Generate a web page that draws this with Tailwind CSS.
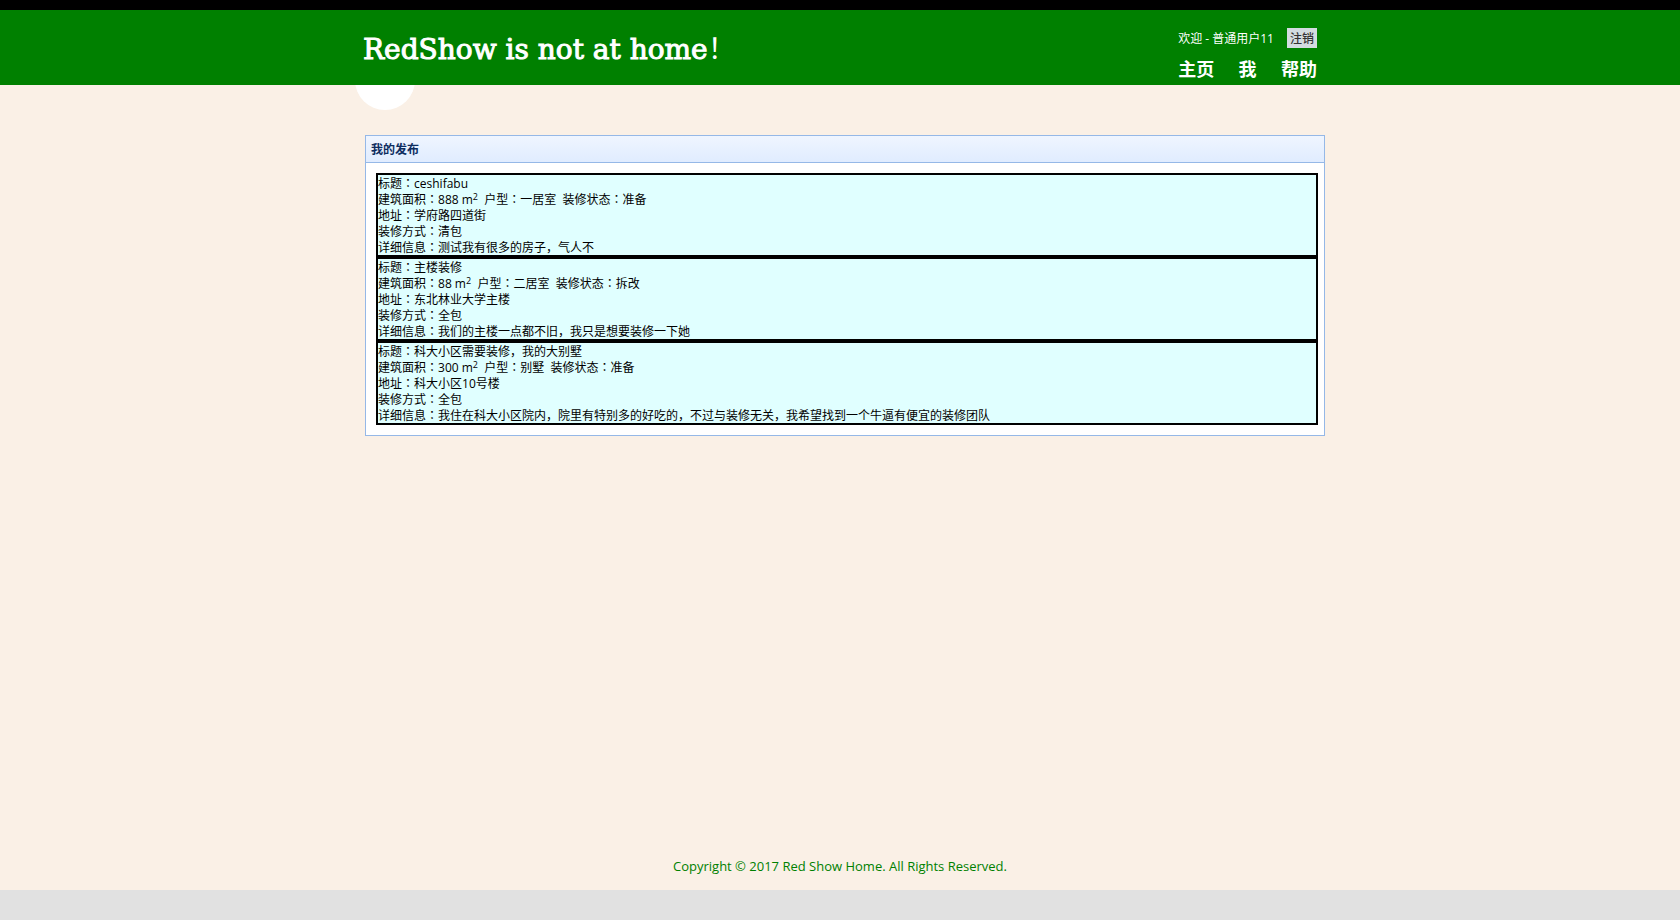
<!DOCTYPE html>
<html lang="zh-CN">
<head>
<meta charset="utf-8">
<meta name="viewport" content="width=device-width, initial-scale=1">
<title>RedShow</title>
<script src="https://cdn.jsdelivr.net/npm/@tailwindcss/browser@4"></script>
</head>
<body class="flex min-h-screen flex-col bg-[#faf0e6] font-['Open_Sans','Noto_Sans_CJK_SC',sans-serif] text-xs text-black">
<header class="relative z-10 h-[85px] border-t-10 border-black bg-[#008000] text-white">
  <div class="mx-auto flex max-w-[970px] items-start justify-between pr-2 pl-2">
    <h1 class="pt-5 font-['DejaVu_Serif','Noto_Sans_CJK_SC',serif] text-[28px] leading-10 [-webkit-text-stroke:1px_white]">RedShow is not at home<span class="leading-none [-webkit-text-stroke:0] font-['Noto_Sans_CJK_SC']">！</span></h1>
    <div class="pt-[18px]">
      <div class="flex h-5 items-center justify-between gap-[13px]">
        <span class="pt-px">欢迎 - 普通用户11</span>
        <button type="button" class="h-5 bg-[#d3dce0] px-[3px] pt-px leading-5 font-medium text-[#333333]">注销</button>
      </div>
      <nav class="flex justify-between pt-[7px] text-lg leading-[29px] font-bold">
        <a href="#">主页</a>
        <a href="#">我</a>
        <a href="#">帮助</a>
      </nav>
    </div>
  </div>
</header>
<main class="relative mx-auto w-full max-w-[970px] grow pt-[50px] pl-[10px]">
  <div class="absolute -top-[35px] left-0 size-[60px] rounded-full bg-white"></div>
  <section class="border border-[#95b8e7] bg-white">
    <h2 class="border-b border-[#95b8e7] bg-linear-to-b from-[#eff5ff] to-[#e0ecff] px-[5px] pt-[6px] pb-1 text-xs leading-4 font-bold text-[#0e2d5f]">我的发布</h2>
    <div class="py-[10px] pr-[6px] pl-[10px] leading-4">
      <article class="border-2 border-black bg-[#e0ffff] pt-px">
        <p>标题<span class="font-['Noto_Sans_CJK_TC'] leading-none" lang="zh-TW">：</span>ceshifabu</p>
        <p>建筑面积<span class="font-['Noto_Sans_CJK_TC'] leading-none" lang="zh-TW">：</span>888 m<sup class="text-[9px]">2</sup>&nbsp; 户型<span class="font-['Noto_Sans_CJK_TC'] leading-none" lang="zh-TW">：</span>一居室&nbsp; 装修状态<span class="font-['Noto_Sans_CJK_TC'] leading-none" lang="zh-TW">：</span>准备</p>
        <p>地址<span class="font-['Noto_Sans_CJK_TC'] leading-none" lang="zh-TW">：</span>学府路四道街</p>
        <p>装修方式<span class="font-['Noto_Sans_CJK_TC'] leading-none" lang="zh-TW">：</span>清包</p>
        <p class="-mb-px">详细信息<span class="font-['Noto_Sans_CJK_TC'] leading-none" lang="zh-TW">：</span>测试我有很多的房子，气人不</p>
      </article>
      <article class="border-2 border-black bg-[#e0ffff] pt-px">
        <p>标题<span class="font-['Noto_Sans_CJK_TC'] leading-none" lang="zh-TW">：</span>主楼装修</p>
        <p>建筑面积<span class="font-['Noto_Sans_CJK_TC'] leading-none" lang="zh-TW">：</span>88 m<sup class="text-[9px]">2</sup>&nbsp; 户型<span class="font-['Noto_Sans_CJK_TC'] leading-none" lang="zh-TW">：</span>二居室&nbsp; 装修状态<span class="font-['Noto_Sans_CJK_TC'] leading-none" lang="zh-TW">：</span>拆改</p>
        <p>地址<span class="font-['Noto_Sans_CJK_TC'] leading-none" lang="zh-TW">：</span>东北林业大学主楼</p>
        <p>装修方式<span class="font-['Noto_Sans_CJK_TC'] leading-none" lang="zh-TW">：</span>全包</p>
        <p class="-mb-px">详细信息<span class="font-['Noto_Sans_CJK_TC'] leading-none" lang="zh-TW">：</span>我们的主楼一点都不旧，我只是想要装修一下她</p>
      </article>
      <article class="border-2 border-black bg-[#e0ffff] pt-px">
        <p>标题<span class="font-['Noto_Sans_CJK_TC'] leading-none" lang="zh-TW">：</span>科大小区需要装修，我的大别墅</p>
        <p>建筑面积<span class="font-['Noto_Sans_CJK_TC'] leading-none" lang="zh-TW">：</span>300 m<sup class="text-[9px]">2</sup>&nbsp; 户型<span class="font-['Noto_Sans_CJK_TC'] leading-none" lang="zh-TW">：</span>别墅&nbsp; 装修状态<span class="font-['Noto_Sans_CJK_TC'] leading-none" lang="zh-TW">：</span>准备</p>
        <p>地址<span class="font-['Noto_Sans_CJK_TC'] leading-none" lang="zh-TW">：</span>科大小区10号楼</p>
        <p>装修方式<span class="font-['Noto_Sans_CJK_TC'] leading-none" lang="zh-TW">：</span>全包</p>
        <p class="-mb-px">详细信息<span class="font-['Noto_Sans_CJK_TC'] leading-none" lang="zh-TW">：</span>我住在科大小区院内，院里有特别多的好吃的，不过与装修无关，我希望找到一个牛逼有便宜的装修团队</p>
      </article>
    </div>
  </section>
</main>
<footer class="border-b-30 border-[#e1e1e1] pb-[14px] text-center text-[13px] leading-5 text-[#008000]">Copyright © 2017 Red Show Home. All Rights Reserved.</footer>
</body>
</html>
